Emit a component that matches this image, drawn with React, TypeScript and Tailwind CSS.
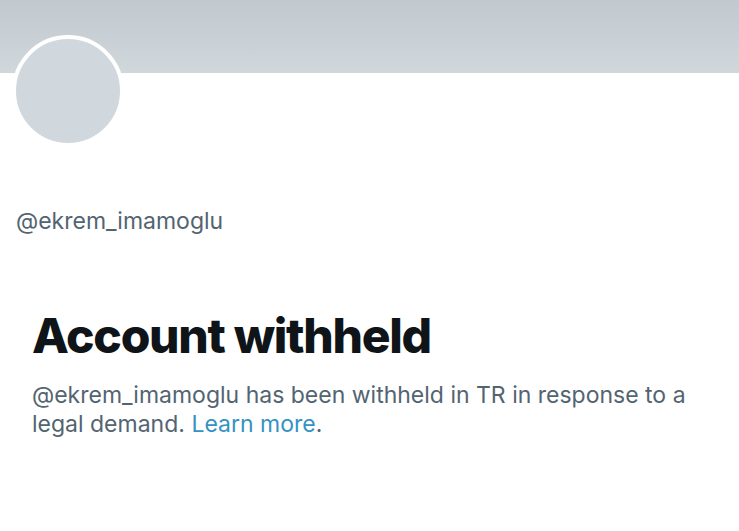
export default function App() {
  return (
    <div className="h-[531px] w-[739px] overflow-hidden bg-white font-['Inter','Liberation_Sans',sans-serif]">
      <div className="h-[73px] bg-gradient-to-b from-[#c1c8ce] to-[#d0d8dc]" />
      <div className="ml-[12px] -mt-[38px] h-[112px] w-[112px] rounded-full border-[4px] border-white bg-[#d0d8de]" />
      <p className="mt-[61px] pl-[16px] text-[23px] leading-[26px] text-[#536471]">@ekrem_imamoglu</p>
      <div className="mt-[76px] px-[32px]">
        <h1 className="text-[48px] font-extrabold leading-[52px] tracking-[-1.3px] text-[#0f1419]">
          Account withheld
        </h1>
        <p className="mt-[19px] text-[23px] leading-[29px] text-[#536471]">
          @ekrem_imamoglu has been withheld in TR in response to a legal demand.{' '}
          <span className="text-[#3592c4]">Learn more</span>.
        </p>
      </div>
    </div>
  )
}
